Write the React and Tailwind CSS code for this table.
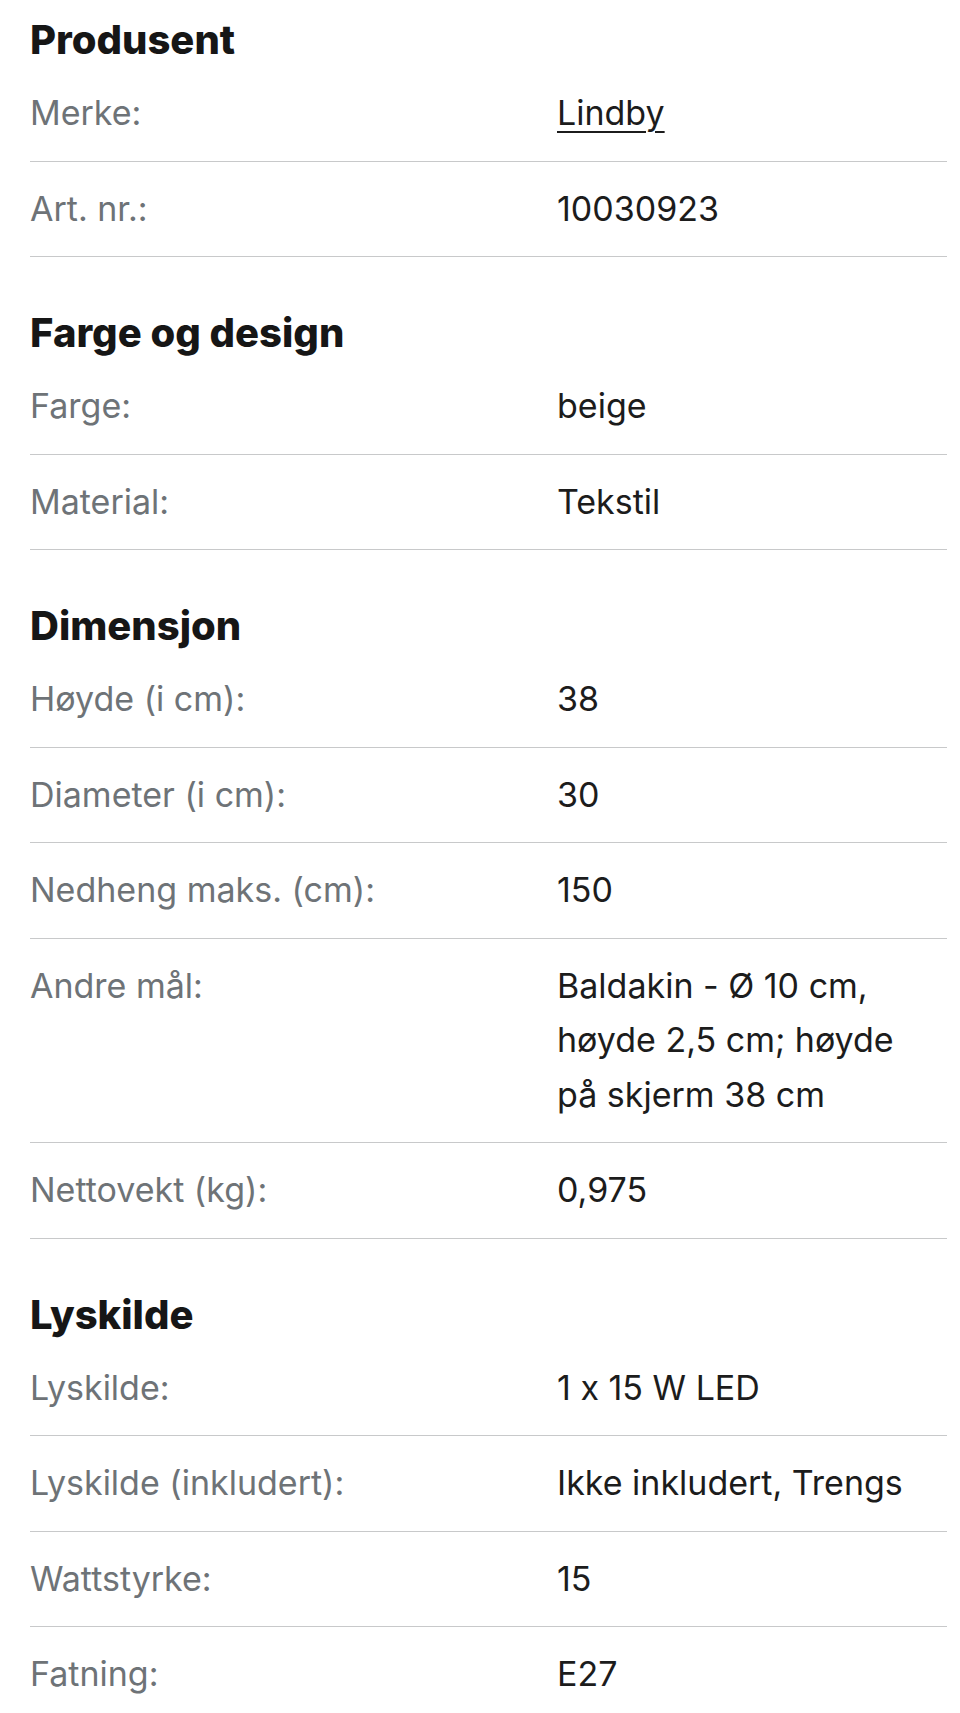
import React from 'react';

const sections = [
  {
    title: 'Produsent',
    rows: [
      { label: 'Merke:', value: 'Lindby', link: true },
      { label: 'Art. nr.:', value: '10030923' },
    ],
  },
  {
    title: 'Farge og design',
    rows: [
      { label: 'Farge:', value: 'beige' },
      { label: 'Material:', value: 'Tekstil' },
    ],
  },
  {
    title: 'Dimensjon',
    rows: [
      { label: 'Høyde (i cm):', value: '38' },
      { label: 'Diameter (i cm):', value: '30' },
      { label: 'Nedheng maks. (cm):', value: '150' },
      { label: 'Andre mål:', value: 'Baldakin - Ø 10 cm, høyde 2,5 cm; høyde på skjerm 38 cm' },
      { label: 'Nettovekt (kg):', value: '0,975' },
    ],
  },
  {
    title: 'Lyskilde',
    rows: [
      { label: 'Lyskilde:', value: '1 x 15 W LED' },
      { label: 'Lyskilde (inkludert):', value: 'Ikke inkludert, Trengs' },
      { label: 'Wattstyrke:', value: '15' },
      { label: 'Fatning:', value: 'E27' },
    ],
  },
];

const SpecRow = ({ label, value, link }) => (
  <div className="grid grid-cols-[527px_1fr] py-[20px] leading-[54.5px] text-[34px] border-b border-[#c8c9ca]">
    <div className="text-[#6e7377]">{label}</div>
    <div className="text-[#1c1c1c] pr-[20px]">
      {link ? <a href="#" className="underline decoration-[2px] underline-offset-[6px]">{value}</a> : value}
    </div>
  </div>
);

export default function App() {
  return (
    <div className="bg-white min-h-screen pl-[30px] pr-[13px] font-['Inter',sans-serif] [font-feature-settings:'calt'_0]">
      {sections.map((s, i) => (
        <section key={s.title} className={i === 0 ? '' : 'mt-[36px]'}>
          <h2 className="pt-[14px] text-[40px] leading-[52px] font-extrabold text-[#161616]">{s.title}</h2>
          {s.rows.map((r) => (
            <SpecRow key={r.label} {...r} />
          ))}
        </section>
      ))}
    </div>
  );
}
